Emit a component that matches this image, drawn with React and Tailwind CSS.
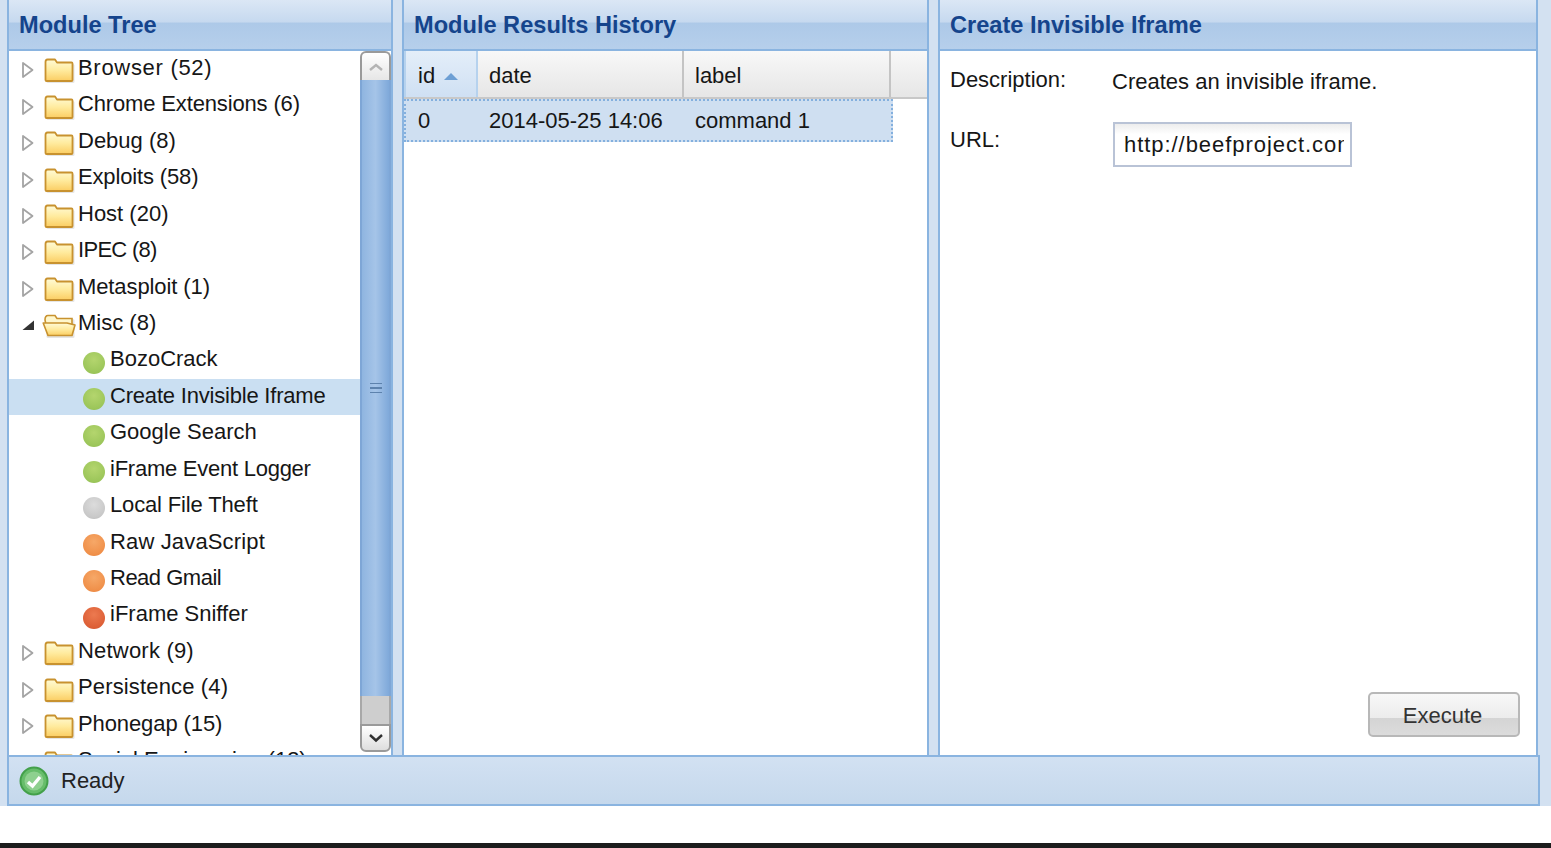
const font = { fontFamily: '"Liberation Sans", Arial, sans-serif' };

const treeTop = [
  { label: "Browser (52)", fit: "tracking-[0.7px]" },
  { label: "Chrome Extensions (6)", fit: "tracking-[-0.15px]" },
  { label: "Debug (8)" },
  { label: "Exploits (58)", fit: "tracking-[-0.15px]" },
  { label: "Host (20)" },
  { label: "IPEC (8)", fit: "tracking-[-0.7px]" },
  { label: "Metasploit (1)", fit: "tracking-[-0.1px]" },
];

const leaves = [
  { name: "BozoCrack", color: "green" },
  { name: "Create Invisible Iframe", color: "green", selected: true, fit: "tracking-[-0.2px]" },
  { name: "Google Search", color: "green" },
  { name: "iFrame Event Logger", color: "green", fit: "tracking-[-0.25px]" },
  { name: "Local File Theft", color: "gray", fit: "tracking-[-0.15px]" },
  { name: "Raw JavaScript", color: "orange", fit: "tracking-[0.15px]" },
  { name: "Read Gmail", color: "orange", fit: "tracking-[-0.5px]" },
  { name: "iFrame Sniffer", color: "red" },
];

const treeBottom = [
  { label: "Network (9)", fit: "tracking-[0.2px]" },
  { label: "Persistence (4)", fit: "tracking-[0.15px]" },
  { label: "Phonegap (15)", fit: "tracking-[-0.1px]" },
  { label: "Social Engineering (13)" },
];

const dotClass = {
  green: "bg-[radial-gradient(circle_at_50%_35%,#b4d56e,#9cc65a_70%,#8cb84e)]",
  gray: "bg-[radial-gradient(circle_at_50%_35%,#dcdcdc,#c8c8c8_70%,#b4b4b4)]",
  orange: "bg-[radial-gradient(circle_at_50%_35%,#f6a868,#f0904a_70%,#e27d38)]",
  red: "bg-[radial-gradient(circle_at_50%_35%,#ec7a50,#dd5f36_70%,#c84f2a)]",
};

const FolderIcon = ({ open }) => (
  <svg width="30" height="26" viewBox="0 0 30 26" className="shrink-0 overflow-visible">
    <defs>
      <linearGradient id="folderFill" x1="0" y1="0" x2="0" y2="1">
        <stop offset="0" stopColor="#fffbd8" />
        <stop offset="0.5" stopColor="#ffeb9e" />
        <stop offset="1" stopColor="#fbcd62" />
      </linearGradient>
    </defs>
    <rect x="2.5" y="7" width="28" height="19" rx="1.5" fill="#a8a8a8" opacity="0.3" />
    {open ? (
      <>
        <path d="M1 8 Q1 3.5 4 3.5 L11 3.5 L13 6.5 L28 6.5 L28 22.5 L4 22.5 Z" fill="#fff7cc" stroke="#c8922f" strokeWidth="1.6" />
        <path d="M-0.8 11 L23 11 L31 13 L28 23.5 L4 23.5 Z" fill="url(#folderFill)" stroke="#c8922f" strokeWidth="1.6" strokeLinejoin="round" />
      </>
    ) : (
      <path d="M1.5 5 Q1.5 2.5 3.5 2.5 L11 2.5 L13 5.5 L27.5 5.5 Q28.5 5.5 28.5 6.5 L28.5 23 Q28.5 24 27.5 24 L2.5 24 Q1.5 24 1.5 23 Z" fill="url(#folderFill)" stroke="#c8922f" strokeWidth="1.8" strokeLinejoin="round" />
    )}
  </svg>
);

const FolderRow = ({ label, open, fit = "" }) => (
  <div className="flex h-[36.44px] items-center pl-[12px]">
    <span className="flex w-[22px] shrink-0 justify-start pt-[2px]">
      {open ? (
        <svg width="14" height="14" viewBox="0 0 14 14">
          <path d="M13 2.5 L13 12 L1.5 12 Z" fill="#333" />
        </svg>
      ) : (
        <svg width="14" height="18" viewBox="0 0 14 18">
          <path d="M2 2 L11.5 9 L2 16 Z" fill="#fff" stroke="#a4a4a4" strokeWidth="1.8" strokeLinejoin="round" />
        </svg>
      )}
    </span>
    <span className="ml-[1px] mt-[2px] flex">
      <FolderIcon open={open} />
    </span>
    <span className={`ml-[4px] -mt-[2.6px] whitespace-nowrap ${fit}`}>{label}</span>
  </div>
);

const LeafRow = ({ name, color, selected, fit = "" }) => (
  <div className={`flex h-[36.44px] items-center pl-[74px] ${selected ? "bg-[#cadff2]" : ""}`}>
    <span className={`mt-[4px] h-[22px] w-[22px] shrink-0 rounded-full ${dotClass[color]}`} />
    <span className={`ml-[5px] -mt-[2.6px] whitespace-nowrap ${fit}`}>{name}</span>
  </div>
);

const PanelHeader = ({ title }) => (
  <div className="h-[51px] shrink-0 border-b-2 border-[#8ab4e0] bg-[linear-gradient(#dbe7f5_0%,#c6d9ef_45%,#adc9e8_47%,#b6cfeb_100%)] pl-[10px] pt-[10px]">
    <span className="text-[23.6px] font-bold leading-[30px] text-[#15448c]">{title}</span>
  </div>
);

const Scrollbar = () => (
  <div className="flex w-[31px] shrink-0 flex-col">
    <div className="flex h-[29px] shrink-0 items-center justify-center rounded-t-md border-2 border-b-0 border-[#9a9a9a] bg-[linear-gradient(#ffffff,#e6e6e6)]">
      <svg width="16" height="10" viewBox="0 0 16 10">
        <path d="M2 8 L8 3 L14 8" fill="none" stroke="#b4b4b4" strokeWidth="2.4" />
      </svg>
    </div>
    <div className="flex h-[616px] shrink-0 flex-col items-center justify-center gap-[3px] border-x-2 border-[#7ea6d6] bg-[linear-gradient(90deg,#8fb5e0,#a5c4e8_50%,#7fa9da)]">
      <span className="h-[1.5px] w-[12px] bg-[#5d82ad]" />
      <span className="h-[1.5px] w-[12px] bg-[#5d82ad]" />
      <span className="h-[1.5px] w-[12px] bg-[#5d82ad]" />
    </div>
    <div className="h-[28px] shrink-0 border-x-2 border-[#a8a8a8] bg-[#cecece]" />
    <div className="flex h-[28px] shrink-0 items-center justify-center rounded-b-md border-2 border-[#9a9a9a] bg-[linear-gradient(#ffffff,#dedede)]">
      <svg width="16" height="10" viewBox="0 0 16 10">
        <path d="M2 2 L8 7.5 L14 2" fill="none" stroke="#303030" strokeWidth="2.4" />
      </svg>
    </div>
  </div>
);

const HeaderCell = ({ className, children }) => (
  <div className={`flex h-full shrink-0 items-center pl-[11px] pt-[4px] ${className}`}>{children}</div>
);

export default function App() {
  return (
    <div className="h-[848px] w-[1551px] overflow-hidden bg-white text-[22px] leading-none text-[#161616]" style={font}>
      <div className="flex h-[806px] flex-col bg-[#d3e1f1]">
        <div className="flex h-[755px] shrink-0 pl-[7px]">
          <div className="flex w-[386px] shrink-0 flex-col border-x-2 border-[#8ab4e0]">
            <PanelHeader title="Module Tree" />
            <div className="flex min-h-0 flex-1 bg-white">
              <div className="min-w-0 flex-1 overflow-hidden">
                {treeTop.map((row) => (
                  <FolderRow key={row.label} {...row} />
                ))}
                <FolderRow label="Misc (8)" open />
                {leaves.map((leaf) => (
                  <LeafRow key={leaf.name} {...leaf} />
                ))}
                {treeBottom.map((row) => (
                  <FolderRow key={row.label} {...row} />
                ))}
              </div>
              <Scrollbar />
            </div>
          </div>

          <div className="ml-[9px] flex w-[527px] shrink-0 flex-col border-x-2 border-[#8ab4e0]">
            <PanelHeader title="Module Results History" />
            <div className="flex-1 bg-white">
              <div className="flex h-[48px] border-b-2 border-[#c8c8c8] bg-[linear-gradient(#f8f8f8,#e6e6e6)]">
                <HeaderCell className="w-[74px] border-x-2 border-[#b6d2ee] bg-[linear-gradient(#e4eef9,#cfe0f3)]">
                  <span className="ml-[1px]">id</span>
                  <svg width="16" height="9" viewBox="0 0 16 9" className="ml-[8px]">
                    <path d="M8 1 L15 8 L1 8 Z" fill="#6d9fd4" />
                  </svg>
                </HeaderCell>
                <HeaderCell className="w-[206px] border-r-2 border-[#c4c4c4]">date</HeaderCell>
                <HeaderCell className="w-[207px] border-r-2 border-[#c4c4c4]">label</HeaderCell>
              </div>
              <div className="flex h-[43px] w-[489px] items-center border-2 border-dotted border-[#84b0de] bg-[#cfdff1] pt-[1px]">
                <span className="w-[72px] pl-[12px]">0</span>
                <span className="w-[206px] pl-[11px]">2014-05-25 14:06</span>
                <span className="pl-[11px]">command 1</span>
              </div>
            </div>
          </div>

          <div className="ml-[9px] flex w-[600px] shrink-0 flex-col border-x-2 border-[#8ab4e0]">
            <PanelHeader title="Create Invisible Iframe" />
            <div className="flex flex-1 flex-col bg-white pb-[18px] pl-[10px] pr-[16px] pt-[16px]">
              <div className="flex h-[26px] items-center">
                <span className="w-[162px] shrink-0">Description:</span>
                <span className="mt-[4px]">Creates an invisible iframe.</span>
              </div>
              <div className="mt-[29px] flex">
                <span className="mt-[7px] w-[163px] shrink-0">URL:</span>
                <div className="h-[45px] w-[239px] overflow-hidden border-2 border-[#b9c3d6] bg-[linear-gradient(#ededed,#ffffff_25%)] pl-[9px] pr-[6px] pt-[10px]">
                  <span className="block overflow-hidden whitespace-nowrap tracking-[0.95px]">http://beefproject.com</span>
                </div>
              </div>
              <div className="mt-auto flex justify-end">
                <button className="h-[45px] w-[152px] rounded-[5px] border-2 border-[#b8b8b8] bg-[linear-gradient(#f8f8f8_0%,#ececec_58%,#d4d4d4_59%,#dcdcdc_100%)] pr-[3px] pt-[2px] text-[22px] text-[#333]">
                  Execute
                </button>
              </div>
            </div>
          </div>
        </div>

        <div className="ml-[7px] flex h-[51px] w-[1533px] shrink-0 items-center border-2 border-[#8ab4e0] bg-[linear-gradient(#d2e1f2,#c5d8ec)] pl-[10px]">
          <svg width="30" height="30" viewBox="0 0 30 30" className="shrink-0">
            <circle cx="15" cy="15" r="13.5" fill="#67bd6b" stroke="#43a04a" strokeWidth="2" />
            <circle cx="15" cy="15" r="9.5" fill="#8ed08f" />
            <path d="M9 16 L13.5 20 L21 11" fill="none" stroke="#fff" strokeWidth="3.4" />
          </svg>
          <span className="ml-[12px] mt-[1px] text-[#222]">Ready</span>
        </div>
      </div>
      <div className="mt-[37px] h-[5px] bg-[#1c1c1c]" />
    </div>
  );
}
